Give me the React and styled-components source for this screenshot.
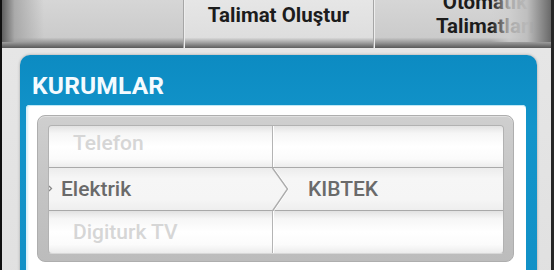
import React from "react";
import styled, { createGlobalStyle } from "styled-components";

const Global = createGlobalStyle`
  html, body { margin: 0; padding: 0; background: #e4e4e4; overflow: hidden; }
  body { font-family: Roboto, "Noto Sans", "Liberation Sans", sans-serif; }
`;

const Screen = styled.div`
  position: relative;
  width: 554px;
  height: 270px;
  box-sizing: border-box;
  overflow: hidden;
  border-left: 2px solid #101010;
  border-right: 3px solid #262626;
  background: #e4e4e4;
  display: flex;
  flex-direction: column;
`;

const TabBar = styled.div`
  position: relative;
  display: flex;
  height: 48px;
  flex: none;
  overflow: hidden;
`;

const Tab = styled.div`
  width: ${(p) => p.$w}px;
  flex: none;
  box-sizing: border-box;
  display: flex;
  justify-content: ${(p) => (p.$align === "start" ? "flex-start" : "center")};
  align-items: flex-start;
  padding-top: 3px;
  border-left: ${(p) => (p.$divider ? "1px solid #a6a6a6" : "none")};
  box-shadow: ${(p) => (p.$divider ? "inset 1px 0 0 #ededed" : "none")};
  background: ${(p) =>
    p.$selected
      ? "linear-gradient(to bottom, #e6e6e6 0%, #dedede 78%, #9a9a9a 90%, #5e5e5e 100%)"
      : "linear-gradient(to bottom, #d6d6d6 0%, #cbcbcb 78%, #909090 90%, #585858 100%)"};
`;

const TabLabel = styled.div`
  font-family: Roboto, "Liberation Sans", sans-serif;
  font-weight: 700;
  font-size: 20.5px;
  line-height: 24px;
  color: #1c1c1c;
  white-space: nowrap;
  text-align: center;
`;

const TwoLineLabel = styled(TabLabel)`
  width: 120px;
  margin-left: 51px;
  margin-top: -13px;
`;

const Fade = styled.div`
  position: absolute;
  top: 0;
  bottom: 6px;
  width: ${(p) => p.$w}px;
  ${(p) => (p.$side === "left" ? "left: 0;" : "right: 0;")}
  pointer-events: none;
  background: ${(p) =>
    p.$side === "left"
      ? "linear-gradient(to right, rgba(95,95,95,1) 0%, rgba(160,160,160,0.8) 30%, rgba(205,205,205,0) 100%)"
      : "linear-gradient(to right, rgba(210,210,210,0) 0%, rgba(206,206,206,0.8) 30%, rgba(190,190,190,0.97) 60%, rgba(105,105,105,1) 100%)"};
`;

const Body = styled.div`
  flex: 1;
  display: flex;
  padding: 7px 14px 0 18px;
  background: linear-gradient(to bottom, #e6e6e6, #e0e0e0);
`;

const Panel = styled.div`
  width: 515px;
  display: flex;
  flex-direction: column;
  border-radius: 10px 10px 0 0;
  background: linear-gradient(to bottom, #0c8bc2 0%, #1294ca 30%, #1190c6 100%);
  box-shadow: 0 0 3px rgba(0, 0, 0, 0.3);
  padding: 0 11px 0 6px;
  height: 240px;
`;

const PanelHeader = styled.div`
  height: 50px;
  box-sizing: border-box;
  padding: 17px 0 0 6px;
  font-family: Roboto, "Liberation Sans", sans-serif;
  font-weight: 700;
  font-size: 24.5px;
  line-height: 28px;
  color: #f4fbff;
  letter-spacing: 0.2px;
`;

const PanelInner = styled.div`
  flex: 1;
  background: #ffffff;
  border-radius: 4px 4px 0 0;
  box-shadow: inset 0 1px 0 #bfe8f6, inset 2px 0 2px #d8f0f8;
  padding: 10px 12px 0 11px;
`;

const PickerFrame = styled.div`
  box-sizing: border-box;
  height: 147px;
  border-radius: 8px;
  border: 1px solid #aeaeae;
  background: linear-gradient(to bottom, #cfcfcf 0%, #c4c4c4 50%, #bcbcbc 100%);
  padding: 9px 9px 8px 10px;
  box-shadow: inset 0 1px 0 #e0e0e0;
`;

const Rows = styled.div`
  display: flex;
  flex-direction: column;
  border-radius: 4px;
  overflow: hidden;
  border: 1px solid #b2b2b2;
  border-bottom-color: #d8d8d8;
`;

const Row = styled.div`
  position: relative;
  display: grid;
  grid-template-columns: 223px 1fr;
  height: ${(p) => p.$h}px;
  border-bottom: ${(p) => (p.$last ? "none" : "1px solid #a9a9a9")};
  background: ${(p) =>
    p.$selected
      ? "linear-gradient(to bottom, #ececec 0%, #f6f6f6 25%, #f5f5f5 75%, #eeeeee 100%)"
      : "linear-gradient(to bottom, #e2e2e2 0%, #f6f6f6 18%, #ffffff 50%, #fbfbfb 80%, #ececec 100%)"};
`;

const Cell = styled.div`
  display: flex;
  align-items: center;
  box-sizing: border-box;
  padding-left: ${(p) => p.$pad}px;
  padding-bottom: ${(p) => p.$lift || 0}px;
  border-left: ${(p) => (p.$divider ? "1px solid #b4b4b4" : "none")};
  box-shadow: ${(p) => (p.$divider ? "inset 1px 0 0 #ffffff" : "none")};
  font-family: Roboto, "Liberation Sans", sans-serif;
  font-weight: 500;
  font-size: 21px;
  color: ${(p) => (p.$dim ? "#d6d6d6" : "#6a6a6a")};
  white-space: nowrap;
`;

const ChevronSvg = styled.svg`
  position: absolute;
  left: 0;
  top: 0;
  pointer-events: none;
`;

function SelectedMarks() {
  return (
    <ChevronSvg width="300" height="43" viewBox="0 0 300 43">
      <polyline points="223.5,0 238.5,21 223.5,43" fill="none" stroke="#ffffff" strokeWidth="1" transform="translate(1.2,0)" />
      <polyline points="223.5,0 238.5,21 223.5,43" fill="none" stroke="#acacac" strokeWidth="1.4" />
      <polyline points="0,18 2.5,20.5 0,23" fill="none" stroke="#8a8a8a" strokeWidth="1.3" />
    </ChevronSvg>
  );
}

export default function App() {
  return (
    <>
      <Global />
      <Screen>
        <TabBar>
          <Tab $w={181} />
          <Tab $w={190} $selected $divider>
            <TabLabel>Talimat Oluştur</TabLabel>
          </Tab>
          <Tab $w={180} $divider $align="start">
            <TwoLineLabel>
              Otomatik
              <br />
              Talimatları
            </TwoLineLabel>
          </Tab>
          <Fade $side="left" $w={42} />
          <Fade $side="right" $w={60} />
        </TabBar>
        <Body>
          <Panel>
            <PanelHeader>KURUMLAR</PanelHeader>
            <PanelInner>
              <PickerFrame>
                <Rows>
                  <Row $h={41}>
                    <Cell $pad={24} $lift={8} $dim>
                      Telefon
                    </Cell>
                    <Cell $divider />
                  </Row>
                  <Row $h={42} $selected>
                    <Cell $pad={12}>Elektrik</Cell>
                    <Cell $pad={36}>KIBTEK</Cell>
                    <SelectedMarks />
                  </Row>
                  <Row $h={42} $last>
                    <Cell $pad={24} $dim>
                      Digiturk TV
                    </Cell>
                    <Cell $divider />
                  </Row>
                </Rows>
              </PickerFrame>
            </PanelInner>
          </Panel>
        </Body>
      </Screen>
    </>
  );
}
